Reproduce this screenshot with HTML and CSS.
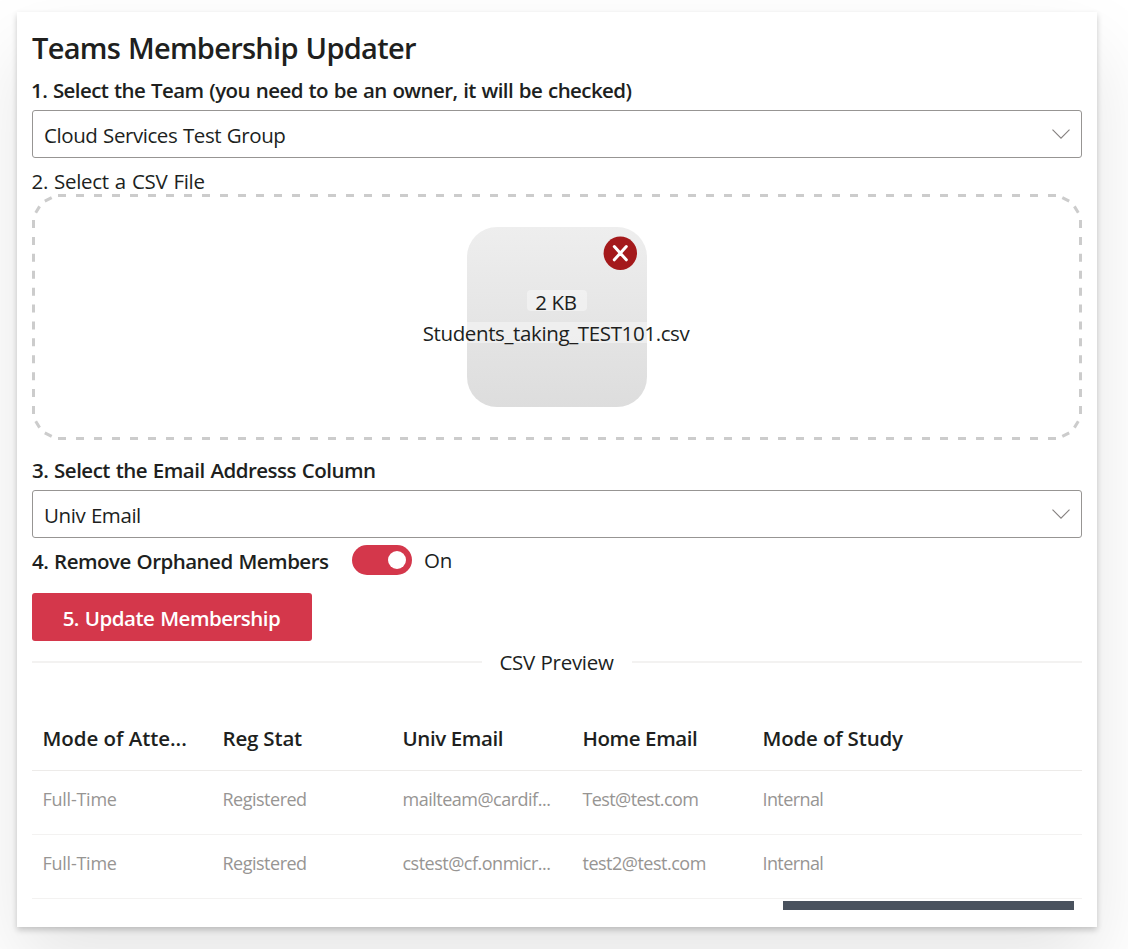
FILE: index.html
```html
<!DOCTYPE html>
<html lang="en">
<head>
<meta charset="utf-8">
<title>Teams Membership Updater</title>
<link rel="stylesheet" href="styles.css">
</head>
<body>
<main class="card">
  <h1 class="title">Teams Membership Updater</h1>
  <div class="label label-team">1. Select the Team (you need to be an owner, it will be checked)</div>
  <div class="select">
    <span class="select-group">Cloud Services Test Group</span>
    <svg class="chevron" viewBox="0 0 18 10"><path d="M0.5 0.7 9 9.2 17.5 0.7"/></svg>
  </div>
  <div class="label-file">2. Select a CSV File</div>
  <div class="dropzone">
    <svg class="dashes" viewBox="0 0 1050 246">
      <path stroke-dasharray="8 10" d="M26 1.5H1024M26 244.5H1024"/>
      <path stroke-dasharray="8 8.91" d="M1.5 26V220M1048.5 26V220"/>
      <path d="M12.8 7.2 19.7 3.6M3.7 18.8 7.6 12.4M1037.2 7.2 1030.3 3.6M1046.3 18.8 1042.4 12.4M12.8 238.8 19.7 242.4M3.7 227.2 7.6 233.6M1037.2 238.8 1030.3 242.4M1046.3 227.2 1042.4 233.6"/>
    </svg>
    <div class="file">
      <span class="file-size">2 KB</span>
      <span class="file-name">Students_taking_TEST101.csv</span>
      <svg class="remove" viewBox="0 0 34 34"><circle cx="17.3" cy="17.2" r="16.7"/><path d="M11.3 10.6 23.3 23.8M23.3 10.6 11.3 23.8"/></svg>
    </div>
  </div>
  <div class="label label-column">3. Select the Email Addresss Column</div>
  <div class="select">
    <span class="select-column">Univ Email</span>
    <svg class="chevron" viewBox="0 0 18 10"><path d="M0.5 0.7 9 9.2 17.5 0.7"/></svg>
  </div>
  <div class="toggle-row">
    <span class="label label-toggle">4. Remove Orphaned Members</span>
    <span class="toggle"><span class="knob"></span></span>
    <span class="toggle-state">On</span>
  </div>
  <button class="update"><span>5. Update Membership</span></button>
  <div class="divider"><span>CSV Preview</span></div>
  <div class="table">
    <div class="row head">
      <span>Mode of Atte...</span><span class="snug">Reg Stat</span><span class="tight">Univ Email</span><span class="tight">Home Email</span><span class="snug">Mode of Study</span>
    </div>
    <div class="row">
      <span class="mode">Full-Time</span><span>Registered</span><span>mailteam@cardif...</span><span class="home">Test@test.com</span><span class="home">Internal</span>
    </div>
    <div class="row">
      <span class="mode">Full-Time</span><span>Registered</span><span>cstest@cf.onmicr...</span><span>test2@test.com</span><span class="home">Internal</span>
    </div>
  </div>
  <div class="scrollbar"></div>
</main>
</body>
</html>
```
FILE: styles.css
```css
* { box-sizing: border-box; }
html, body { height: 949px; overflow: hidden; }
body {
  margin: 0;
  padding: 12px 31px 0 17px;
  background: #fff;
  color: #201f1e;
  font-family: "Open Sans", "Noto Sans", sans-serif;
  font-size: 20.5px;
  line-height: 28px;
  white-space: nowrap;
}
.card {
  width: 1080px;
  height: 915px;
  padding: 16px 15px 0;
  background: #fff;
  box-shadow: 0 3px 6px rgba(0, 0, 0, .2), 0 37.5px 75px rgba(0, 0, 0, .1);
}
.title { margin: 0; font-size: 29px; line-height: 40px; font-weight: 600; letter-spacing: -.72px; word-spacing: 1px; }
.label { font-weight: 600; letter-spacing: -.52px; word-spacing: 1px; }
.label-team { margin: 8px 0 0 -1px; height: 34px; letter-spacing: -.58px; }
.select {
  display: flex;
  align-items: center;
  justify-content: space-between;
  height: 48px;
  padding: 1px 11px 0;
  border: 1px solid #979593;
  border-radius: 3px;
  letter-spacing: -.43px;
  word-spacing: .8px;
}
.chevron { width: 18px; height: 10px; margin-top: -2px; fill: none; stroke: #85817f; stroke-width: 1.1; }
.label-file { height: 36px; margin-left: -.5px; padding-top: 9px; letter-spacing: -.3px; word-spacing: 1px; }
.dropzone { display: grid; place-items: center; height: 246px; }
.dropzone > * { grid-area: 1 / 1; }
.dashes { width: 1050px; height: 246px; fill: none; stroke: #ccc; stroke-width: 3; }
.file {
  position: relative;
  display: flex;
  flex-direction: column;
  align-items: center;
  width: 180px;
  height: 180px;
  padding-top: 63px;
  border-radius: 30px;
  background: linear-gradient(#eee, #ddd);
  letter-spacing: -.37px;
}
.file-size, .file-name {
  height: 21px;
  padding: 0 10px 0 8px;
  border-radius: 4px;
  background: rgba(255, 255, 255, .4);
  line-height: 24px;
}
.file-name { margin-top: 11px; padding: 0 7px 0 5px; line-height: 23px; }
.remove { position: absolute; top: 9px; right: 10px; width: 34px; height: 34px; fill: #a4191b; }
.remove path { stroke: #fff; stroke-width: 3; stroke-linecap: round; }
.label-column { height: 50px; padding-top: 16px; }
.toggle-row { display: flex; align-items: center; height: 45px; padding-bottom: 1px; }
.label-toggle { width: 320px; padding-top: 2px; }
.toggle { display: flex; justify-content: flex-end; align-items: center; width: 60px; height: 30px; padding-right: 6px; border-radius: 15px; background: #d4374b; }
.knob { width: 18px; height: 18px; border-radius: 50%; background: #fff; }
.toggle-state { margin-left: 12px; letter-spacing: -.3px; }
.update {
  display: block;
  width: 280px;
  height: 48px;
  margin-top: 10px;
  padding: 1px 1px 0 0;
  border: 0;
  border-radius: 3px;
  background: #d4374b;
  color: #fff;
  font: 600 20.5px/28px "Open Sans", sans-serif;
  letter-spacing: -.5px;
  word-spacing: 1px;
}
.divider { display: flex; align-items: center; height: 42px; }
.divider::before, .divider::after { content: ""; flex: 1; height: 2px; background: #f3f2f1; }
.divider span { width: 151px; margin-left: -1px; padding-bottom: 1px; text-align: center; letter-spacing: -.3px; word-spacing: .6px; }
.table { margin-top: 24px; }
.row {
  display: grid;
  grid-template-columns: repeat(5, 180px);
  height: 64px;
  padding: 14px 10px 0 10.5px;
  border-bottom: 1px solid #f3f2f1;
  color: #979593;
  font-size: 18px;
  letter-spacing: -.5px;
}
.mode { letter-spacing: -.25px; }
.home { letter-spacing: -.6px; }
.head { padding-top: 17px; border-color: #edebe9; color: #201f1e; font-size: 20.5px; font-weight: 600; letter-spacing: -.05px; }
.head .snug { letter-spacing: -.18px; }
.head .tight { letter-spacing: -.4px; }
.scrollbar { width: 291px; height: 9px; margin: 2px 0 0 751px; background: #4a525e; }
```
